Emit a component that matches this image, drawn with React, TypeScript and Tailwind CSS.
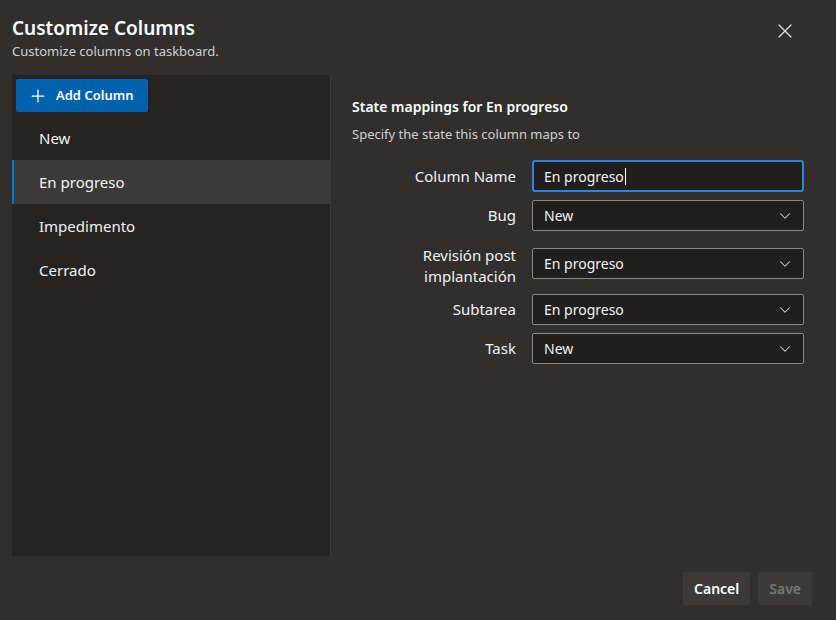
import { Plus, X, ChevronDown } from 'lucide-react';

const COLUMNS = ['New', 'En progreso', 'Impedimento', 'Cerrado'];

function Select({ value }: { value: string }) {
  return (
    <div className="flex h-[31px] w-[272px] items-center justify-between rounded-[2px] border border-[#8a8886] bg-[#201f1e] pl-[11px] pr-[9px] text-[14px] text-[#f3f2f1]">
      <span>{value}</span>
      <ChevronDown size={18} strokeWidth={1.4} className="text-[#d2d0ce]" />
    </div>
  );
}

export default function App() {
  const font = { fontFamily: '"Noto Sans", "Segoe UI", sans-serif' };
  return (
    <div style={font} className="flex h-[620px] w-[836px] flex-col bg-[#302f2e] text-[#f3f2f1]">
      {/* Header */}
      <div className="flex items-start justify-between pl-3 pr-[39px] pt-[14px]">
        <div>
          <h1 className="text-[19px] font-semibold leading-[28px] text-white">Customize Columns</h1>
          <p className="text-[13px] leading-[18px] text-[#d2d0ce]">Customize columns on taskboard.</p>
        </div>
        <button className="mt-[5px] text-[#e1dfdd]">
          <X size={24} strokeWidth={1.25} />
        </button>
      </div>

      {/* Body */}
      <div className="mt-[15px] flex h-[481px]">
        <div className="ml-3 flex w-[319px] flex-col border-r border-[#3b3a39] bg-[#252423]">
          <div className="p-1">
            <button className="flex h-[33px] items-center gap-[8px] rounded-[2px] bg-[#0062ad] pl-[12px] pr-[15px] text-[13px] font-semibold text-white">
              <Plus size={20} strokeWidth={1.5} />
              Add Column
            </button>
          </div>
          <ul>
            {COLUMNS.map((c) => {
              const selected = c === 'En progreso';
              return (
                <li
                  key={c}
                  className={`flex h-[44px] items-center text-[15px] text-[#f3f2f1] ${
                    selected ? 'border-l-2 border-[#0078d4] bg-[#3b3a39] pl-[25px]' : 'pl-[27px]'
                  }`}
                >
                  {c}
                </li>
              );
            })}
          </ul>
        </div>

        <div className="flex-1 pl-[21px] pt-[22px]">
          <h2 className="text-[14px] font-semibold leading-[20px] text-white">State mappings for En progreso</h2>
          <p className="mt-[8px] text-[13px] leading-[18px] text-[#d2d0ce]">Specify the state this column maps to</p>

          <div className="mt-[17px] flex flex-col text-[15px] text-[#f3f2f1]">
            <div className="flex items-center gap-[16px]">
              <label className="w-[164px] text-right">Column Name</label>
              <div className="flex h-[32px] w-[272px] items-center rounded-[3px] border-2 border-[#2886de] bg-[#201f1e] pl-[10px] text-[14px] text-[#f3f2f1]">
                En progreso
                <span className="ml-px inline-block h-[17px] w-px bg-white" />
              </div>
            </div>
            <div className="mt-[8px] flex items-center gap-[16px]">
              <label className="w-[164px] text-right">Bug</label>
              <Select value="New" />
            </div>
            <div className="mt-[14px] flex items-start gap-[16px]">
              <label className="w-[164px] text-right leading-[21px]">
                Revisión post
                <br />
                implantación
              </label>
              <div className="mt-[3px]">
                <Select value="En progreso" />
              </div>
            </div>
            <div className="mt-[7px] flex items-center gap-[16px]">
              <label className="w-[164px] text-right">Subtarea</label>
              <Select value="En progreso" />
            </div>
            <div className="mt-[8px] flex items-center gap-[16px]">
              <label className="w-[164px] text-right">Task</label>
              <Select value="New" />
            </div>
          </div>
        </div>
      </div>

      {/* Footer */}
      <div className="mt-[16px] flex justify-end gap-[8px] pr-[24px]">
        <button className="h-[33px] rounded-[2px] bg-[#3b3a39] px-[11px] text-[14px] font-semibold text-white">Cancel</button>
        <button className="h-[33px] rounded-[2px] bg-[#3b3a39] px-[11px] text-[14px] font-semibold text-[#797775]">Save</button>
      </div>
    </div>
  );
}
